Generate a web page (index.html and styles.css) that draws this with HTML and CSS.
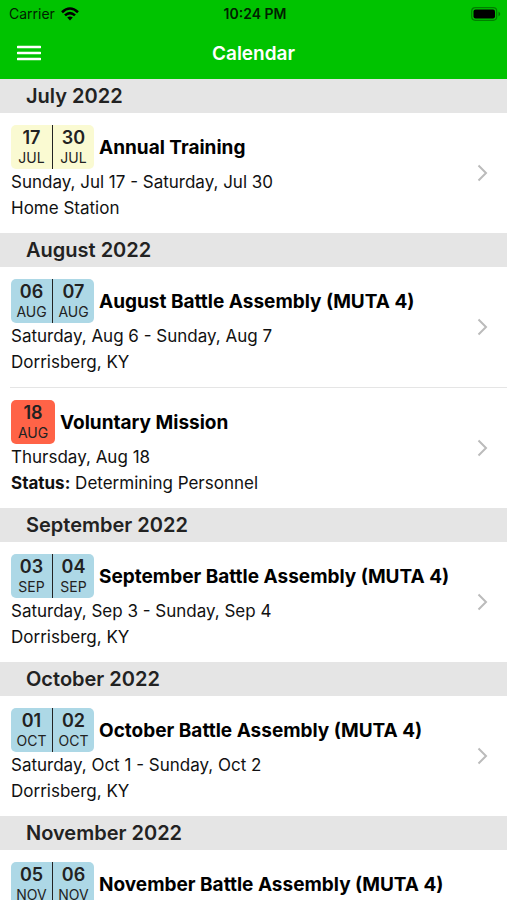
FILE: index.html
```html
<!DOCTYPE html>
<html lang="en">
<head>
<meta charset="utf-8">
<meta name="viewport" content="width=device-width, initial-scale=1">
<title>Calendar</title>
<link rel="stylesheet" href="styles.css">
</head>
<body>
<svg class="sprite" aria-hidden="true">
  <symbol id="chevron" viewBox="0 0 12 18"><path d="M1.500 1.500L9 9l-7.500 7.500" fill="none" stroke="currentColor" stroke-width="2"/></symbol>
</svg>
<header class="top">
  <div class="status">
    <div class="carrier"><span>Carrier</span>
      <svg width="18" height="14" viewBox="0 0 18 14" aria-hidden="true">
        <g fill="none" stroke="currentColor" stroke-width="2.6"><path d="M1 5.2Q9-2.200 17 5.200"/><path d="M4 8.400Q9 3.800 14 8.400"/></g>
        <path d="M6.200 10.600Q9 8.400 11.800 10.600L9 13.500z" fill="currentColor"/>
      </svg>
    </div>
    <time class="clock">10:24 PM</time>
    <svg class="battery" width="30" height="14" viewBox="0 0 30 14" aria-hidden="true">
      <rect x=".7" y=".7" width="25" height="12.600" rx="3.500" fill="none" stroke="#000" stroke-opacity=".35" stroke-width="1.200"/>
      <rect x="2.500" y="2.500" width="21.500" height="9" rx="2"/>
      <path d="M27.500 4.600q3.500 2.400 0 4.800z" fill-opacity=".4"/>
    </svg>
  </div>
  <nav class="bar">
    <button class="menu" type="button" aria-label="Menu">
      <svg width="24" height="16" viewBox="0 0 24 16" aria-hidden="true"><path d="M1 2h22M1 8h22M1 14h22" stroke="#fff" stroke-width="2.600" stroke-linecap="round"/></svg>
    </button>
    <h1>Calendar</h1>
  </nav>
</header>
<main class="list">
  <section>
    <h2>July 2022</h2>
    <a class="event" href="#annual-training">
      <div class="body">
        <div class="head">
          <div class="badge yellow"><div class="day"><b>17</b><span>JUL</span></div><div class="day"><b>30</b><span>JUL</span></div></div>
          <h3>Annual Training</h3>
        </div>
        <p>Sunday, Jul 17 - Saturday, Jul 30</p>
        <p>Home Station</p>
      </div>
      <svg class="chevron"><use href="#chevron"/></svg>
    </a>
  </section>
  <section>
    <h2>August 2022</h2>
    <a class="event" href="#august-assembly">
      <div class="body">
        <div class="head">
          <div class="badge blue"><div class="day"><b>06</b><span>AUG</span></div><div class="day"><b>07</b><span>AUG</span></div></div>
          <h3>August Battle Assembly (MUTA 4)</h3>
        </div>
        <p>Saturday, Aug 6 - Sunday, Aug 7</p>
        <p>Dorrisberg, KY</p>
      </div>
      <svg class="chevron"><use href="#chevron"/></svg>
    </a>
    <a class="event" href="#voluntary-mission">
      <div class="body">
        <div class="head">
          <div class="badge red"><div class="day"><b>18</b><span>AUG</span></div></div>
          <h3>Voluntary Mission</h3>
        </div>
        <p>Thursday, Aug 18</p>
        <p><strong>Status:</strong> Determining Personnel</p>
      </div>
      <svg class="chevron"><use href="#chevron"/></svg>
    </a>
  </section>
  <section>
    <h2>September 2022</h2>
    <a class="event" href="#september-assembly">
      <div class="body">
        <div class="head">
          <div class="badge blue"><div class="day"><b>03</b><span>SEP</span></div><div class="day"><b>04</b><span>SEP</span></div></div>
          <h3>September Battle Assembly (MUTA 4)</h3>
        </div>
        <p>Saturday, Sep 3 - Sunday, Sep 4</p>
        <p>Dorrisberg, KY</p>
      </div>
      <svg class="chevron"><use href="#chevron"/></svg>
    </a>
  </section>
  <section>
    <h2>October 2022</h2>
    <a class="event" href="#october-assembly">
      <div class="body">
        <div class="head">
          <div class="badge blue"><div class="day"><b>01</b><span>OCT</span></div><div class="day"><b>02</b><span>OCT</span></div></div>
          <h3>October Battle Assembly (MUTA 4)</h3>
        </div>
        <p>Saturday, Oct 1 - Sunday, Oct 2</p>
        <p>Dorrisberg, KY</p>
      </div>
      <svg class="chevron"><use href="#chevron"/></svg>
    </a>
  </section>
  <section>
    <h2>November 2022</h2>
    <a class="event" href="#november-assembly">
      <div class="body">
        <div class="head">
          <div class="badge blue"><div class="day"><b>05</b><span>NOV</span></div><div class="day"><b>06</b><span>NOV</span></div></div>
          <h3>November Battle Assembly (MUTA 4)</h3>
        </div>
      </div>
    </a>
  </section>
</main>
</body>
</html>
```
FILE: styles.css
```css
* { box-sizing: border-box; }
body {
  margin: 0;
  height: 100vh;
  display: flex;
  flex-direction: column;
  overflow: hidden;
  background: #fff;
  color: #111;
  font-family: Inter, "Liberation Sans", sans-serif;
}
h1, h2, h3, p { margin: 0; }
.sprite { position: absolute; width: 0; height: 0; }

.top { flex: none; background: #00c300; }
.status {
  display: grid;
  grid-template-columns: 1fr auto 1fr;
  align-items: center;
  height: 27px;
  padding: 0 6px 0 9px;
  font-size: 14px;
  color: #002000;
}
.carrier { display: flex; align-items: center; gap: 6px; }
.carrier svg { color: #000; }
.clock { font-weight: 600; }
.battery { justify-self: end; }
.bar {
  display: grid;
  grid-template-columns: 1fr auto 1fr;
  align-items: center;
  height: 52px;
  padding: 0 17px;
  color: #fff;
}
.menu {
  justify-self: start;
  display: flex;
  padding: 0;
  border: 0;
  background: none;
}
.bar h1 { font-size: 19px; font-weight: 600; }

.list { flex: 1; overflow-y: auto; scrollbar-width: none; }
.list h2 {
  padding: 0 26px;
  background: #e5e5e5;
  color: #222;
  font-size: 20px;
  line-height: 34px;
  font-weight: 600;
}
.event {
  display: flex;
  align-items: center;
  padding: 12px 18px 12px 11px;
  color: inherit;
  text-decoration: none;
}
.event + .event {
  border-top: 1px solid #e5e5e5;
  border-image: linear-gradient(to right, transparent 11px, #e5e5e5 11px) 1;
}
.body { flex: 1; min-width: 0; }
.head { display: flex; align-items: center; gap: 5px; height: 44px; }
.head h3 { font-size: 19px; line-height: 24px; padding-top: 2px; font-weight: 700; color: #000; white-space: nowrap; }
.body p { font-size: 17px; line-height: 26px; }
.badge { display: flex; height: 44px; border-radius: 5px; color: #222; }
.yellow { background: #fafad2; }
.blue { background: #add8e6; }
.red { background: #ff6347; }
.day { width: 42px; text-align: center; }
.day:first-child { width: 41px; }
.day:only-child { width: 44px; }
.day + .day { border-left: 1px solid #222; }
.day b, .day span { display: block; }
.day b { font-size: 18px; line-height: 26px; font-weight: 600; }
.day span { font-size: 14px; line-height: 13px; }
.chevron { flex: none; width: 12px; height: 18px; color: #bbb; }
```
